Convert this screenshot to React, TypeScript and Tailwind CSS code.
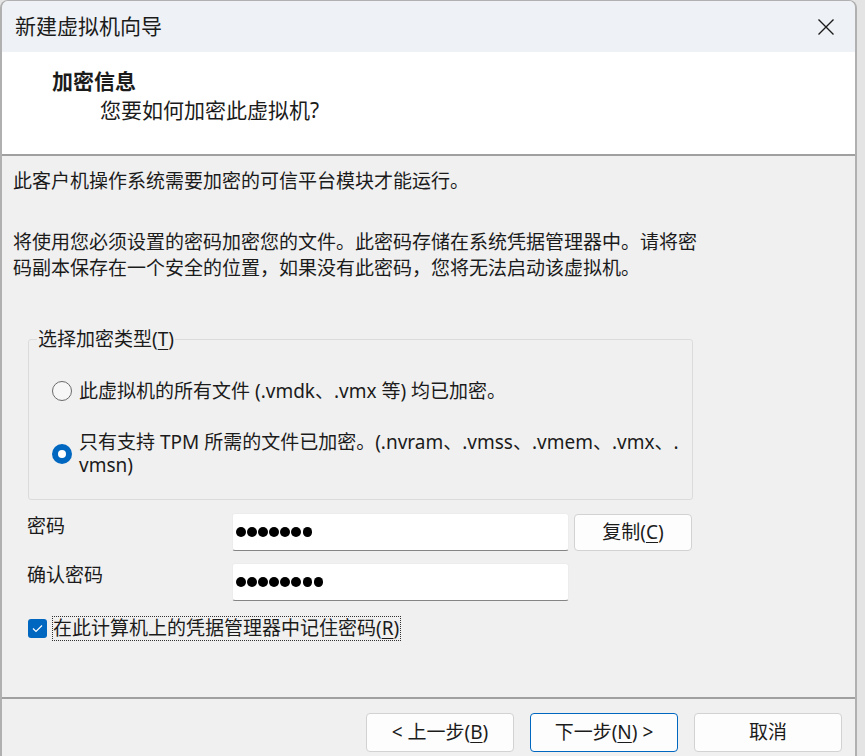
import React from "react";

// 新建虚拟机向导 - 加密信息 page

const font = "font-['Noto_Sans','Noto_Sans_CJK_SC',sans-serif]";

function Dots({ n }: { n: number }) {
  return (
    <div className="flex items-center gap-[1.6px] pl-[3px]">
      {Array.from({ length: n }).map((_, i) => (
        <div key={i} className="h-[9.5px] w-[9.5px] rounded-full bg-black" />
      ))}
    </div>
  );
}

function Radio({ checked }: { checked?: boolean }) {
  if (checked) {
    return (
      <div className="flex h-[20px] w-[20px] shrink-0 items-center justify-center rounded-full bg-[#0067c0]">
        <div className="h-[8px] w-[8px] rounded-full bg-white" />
      </div>
    );
  }
  return <div className="h-[20px] w-[20px] shrink-0 rounded-full border border-[#6a6a6a] bg-[#f7f7f7]" />;
}

function Btn({ children, primary }: { children: React.ReactNode; primary?: boolean }) {
  return (
    <div
      className={
        "flex h-[39px] w-[148px] items-center justify-center rounded-[4px] bg-[#fdfdfd] text-[19px] " +
        (primary ? "border border-[#0067c0]" : "border border-[#d2d2d2]")
      }
    >
      {children}
    </div>
  );
}

export default function App() {
  return (
    <div className={"h-[756px] w-[865px] overflow-hidden bg-[#e4e4e4] text-[#1b1b1b] " + font}>
      <div className="flex h-[770px] w-[857px] flex-col overflow-hidden rounded-t-[8px] border-x-2 border-t border-[#b0b0b0] bg-[#f0f0f0]">
        {/* title bar */}
        <div className="flex h-[51px] shrink-0 items-center justify-between bg-[#eef2f6] pl-[13px] pr-[18px]">
          <span className="text-[21px]">新建虚拟机向导</span>
          <svg width="18" height="18" viewBox="0 0 18 18" className="mr-[2px]">
            <path d="M1.5 1.5 L16.5 16.5 M16.5 1.5 L1.5 16.5" stroke="#1b1b1b" strokeWidth="1.4" />
          </svg>
        </div>

        {/* header */}
        <div className="flex h-[104px] shrink-0 flex-col border-b-2 border-[#a0a0a0] bg-white pl-[50px] pt-[15px]">
          <span className="text-[21px] font-bold leading-[29px]">加密信息</span>
          <span className="pl-[48px] text-[21px] leading-[29px]">您要如何加密此虚拟机?</span>
        </div>

        {/* body */}
        <div className="flex h-[541px] shrink-0 flex-col pl-[11px] text-[19px]">
          <p className="mt-[12px] leading-[26px]">此客户机操作系统需要加密的可信平台模块才能运行。</p>
          <p className="mt-[35px] leading-[26px]">
            将使用您必须设置的密码加密您的文件。此密码存储在系统凭据管理器中。请将密
            <br />
            码副本保存在一个安全的位置，如果没有此密码，您将无法启动该虚拟机。
          </p>

          {/* group box */}
          <div className="relative ml-[15px] mt-[58px] h-[161px] w-[665px] rounded-[3px] border border-[#dcdcdc]">
            <span className="absolute left-[8px] top-[-14px] bg-[#f0f0f0] px-[1px] leading-[26px]">
              选择加密类型(<span className="underline underline-offset-[3px]">T</span>)
            </span>
            <div className="flex flex-col pl-[23px] pt-[39px]">
              <div className="flex items-center gap-[7px]">
                <Radio />
                <span className="leading-[24px]">此虚拟机的所有文件 (.vmdk、.vmx 等) 均已加密。</span>
              </div>
              <div className="mt-[28px] flex items-center gap-[7px]">
                <Radio checked />
                <span className="leading-[23px]">
                  只有支持 TPM 所需的文件已加密。(.nvram、.vmss、.vmem、.vmx、.
                  <br />
                  vmsn)
                </span>
              </div>
            </div>
          </div>

          {/* password rows */}
          <div className="ml-[14px] mt-[13px] flex items-center">
            <span className="w-[205px] self-start pt-[1px] leading-[24px]">密码</span>
            <div className="flex h-[38px] w-[337px] items-center rounded-[3px] border border-[#ececec] border-b-[#858585] bg-white">
              <Dots n={7} />
            </div>
            <div className="ml-[5px] flex h-[37px] w-[118px] items-center justify-center rounded-[4px] border border-[#d2d2d2] bg-[#fdfdfd]">
              复制(<span className="underline underline-offset-[3px]">C</span>)
            </div>
          </div>
          <div className="ml-[14px] mt-[12px] flex items-center">
            <span className="w-[205px] self-start leading-[24px]">确认密码</span>
            <div className="flex h-[38px] w-[337px] items-center rounded-[3px] border border-[#ececec] border-b-[#858585] bg-white">
              <Dots n={8} />
            </div>
          </div>

          {/* remember */}
          <div className="ml-[15px] mt-[15px] flex items-center gap-[5px]">
            <div className="flex h-[19px] w-[19px] items-center justify-center rounded-[3px] bg-[#0067c0]">
              <svg width="11" height="9" viewBox="0 0 11 9">
                <path d="M1 4.5 L4 7.5 L10 1.5" stroke="white" strokeWidth="1.2" fill="none" />
              </svg>
            </div>
            <span className="border border-dotted border-[#333] pr-[1px] leading-[23px]">
              在此计算机上的凭据管理器中记住密码(<span className="underline underline-offset-[3px]">R</span>)
            </span>
          </div>
        </div>

        {/* footer */}
        <div className="flex h-[70px] shrink-0 items-start justify-end gap-[16px] border-t-2 border-[#a0a0a0] pr-[13px] pt-[14px]">
          <Btn>
            &lt; 上一步(<span className="underline underline-offset-[3px]">B</span>)
          </Btn>
          <Btn primary>
            下一步(<span className="underline underline-offset-[3px]">N</span>) &gt;
          </Btn>
          <Btn>取消</Btn>
        </div>
      </div>
    </div>
  );
}
